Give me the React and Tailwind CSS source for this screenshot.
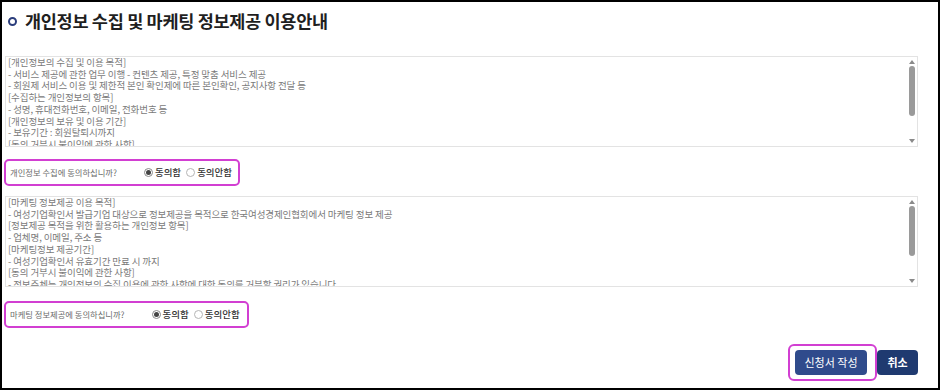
import React from "react";

const font = { fontFamily: '"Noto Sans CJK KR", "Noto Sans", sans-serif' };

function ScrollBox({ lines, height }) {
  return (
    <div
      className="ml-[3px] flex w-[913px] border border-[#e3e3e3] bg-white"
      style={{ height }}
    >
      <div className="flex-1 overflow-hidden pl-[2px] text-[9.5px] leading-[11.7px] tracking-[-0.1px] text-[#7a7a7a]">
        {lines.map((l, i) => (
          <div key={i} className="whitespace-nowrap">
            {l}
          </div>
        ))}
      </div>
      <div className="flex w-[11px] flex-col items-center py-[3px]">
        <div className="h-0 w-0 border-x-[3.5px] border-b-[4px] border-x-transparent border-b-[#8a8a8a]" />
        <div className="mt-[2px] h-[50px] w-[6px] rounded-full bg-[#9a9a9a]" />
        <div className="flex-1" />
        <div className="h-0 w-0 border-x-[3.5px] border-t-[4px] border-x-transparent border-t-[#8a8a8a]" />
      </div>
    </div>
  );
}

function Consent({ label, width, gap }) {
  return (
    <div
      className="ml-[2px] flex h-[27px] items-center whitespace-nowrap rounded-[5px] border-2 border-[#d23fd2] pl-[4px]"
      style={{ width }}
    >
      <span className="shrink-0 text-[8.3px] text-[#6b6b6b]">{label}</span>
      <span className="flex shrink-0 items-center" style={{ marginLeft: gap }}>
        <span className="flex h-[9px] w-[9px] items-center justify-center rounded-full border border-[#8a8a8a] bg-white">
          <span className="h-[5px] w-[5px] rounded-full bg-[#444]" />
        </span>
        <span className="ml-[2px] text-[9.5px] font-medium text-[#333]">동의함</span>
      </span>
      <span className="ml-[5px] flex shrink-0 items-center">
        <span className="h-[9px] w-[9px] rounded-full border border-[#b5b5b5] bg-white" />
        <span className="ml-[2px] text-[9.5px] font-medium text-[#333]">동의안함</span>
      </span>
    </div>
  );
}

export default function App() {
  const lines1 = [
    "[개인정보의 수집 및 이용 목적]",
    "- 서비스 제공에 관한 업무 이행 - 컨텐츠 제공, 특정 맞춤 서비스 제공",
    "- 회원제 서비스 이용 및 제한적 본인 확인제에 따른 본인확인, 공지사항 전달 등",
    "[수집하는 개인정보의 항목]",
    "- 성명, 휴대전화번호, 이메일, 전화번호 등",
    "[개인정보의 보유 및 이용 기간]",
    "- 보유기간 : 회원탈퇴시까지",
    "[동의 거부시 불이익에 관한 사항]",
    "- 정보주체는 개인정보의 수집 이용에 관한 사항에 대한 동의를 거부할 권리가 있습니다.",
  ];
  const lines2 = [
    "[마케팅 정보제공 이용 목적]",
    "- 여성기업확인서 발급기업 대상으로 정보제공을 목적으로 한국여성경제인협회에서 마케팅 정보 제공",
    "[정보제공 목적을 위한 활용하는 개인정보 항목]",
    "- 업체명, 이메일, 주소 등",
    "[마케팅정보 제공기간]",
    "- 여성기업확인서 유효기간 만료 시 까지",
    "[동의 거부시 불이익에 관한 사항]",
    "- 정보주체는 개인정보의 수집 이용에 관한 사항에 대한 동의를 거부할 권리가 있습니다.",
  ];
  return (
    <div
      className="flex h-[390px] w-[940px] flex-col overflow-hidden border-2 border-black bg-white"
      style={font}
    >
      <div className="ml-[6px] mt-[9px] flex h-[20px] items-center">
        <span className="h-[9px] w-[9px] shrink-0 rounded-full border-[2.5px] border-[#2b3d7c]" />
        <span className="ml-[8px] whitespace-nowrap text-[17.5px] font-bold leading-[20px] tracking-[-0.3px] text-[#1f1f1f]">
          개인정보 수집 및 마케팅 정보제공 이용안내
        </span>
      </div>
      <div className="mt-[25px]">
        <ScrollBox lines={lines1} height={91} />
      </div>
      <div className="mt-[12px]">
        <Consent label="개인정보 수집에 동의하십니까?" width={236} gap={27} />
      </div>
      <div className="mt-[10px]">
        <ScrollBox lines={lines2} height={91} />
      </div>
      <div className="mt-[14px]">
        <Consent label="마케팅 정보제공에 동의하십니까?" width={245} gap={27} />
      </div>
      <div className="mr-[20px] mt-[16px] flex items-center justify-end">
        <div className="flex h-[37px] items-center rounded-[6px] border-2 border-[#d23fd2] pl-[5px] pr-[8px]">
          <button className="h-[25px] w-[72px] rounded-[4px] bg-[#2f4b8c] text-[11px] text-white">
            신청서 작성
          </button>
        </div>
        <button className="h-[25px] w-[41px] rounded-[4px] bg-[#1f3a70] text-[11px] font-semibold text-white">
          취소
        </button>
      </div>
    </div>
  );
}
